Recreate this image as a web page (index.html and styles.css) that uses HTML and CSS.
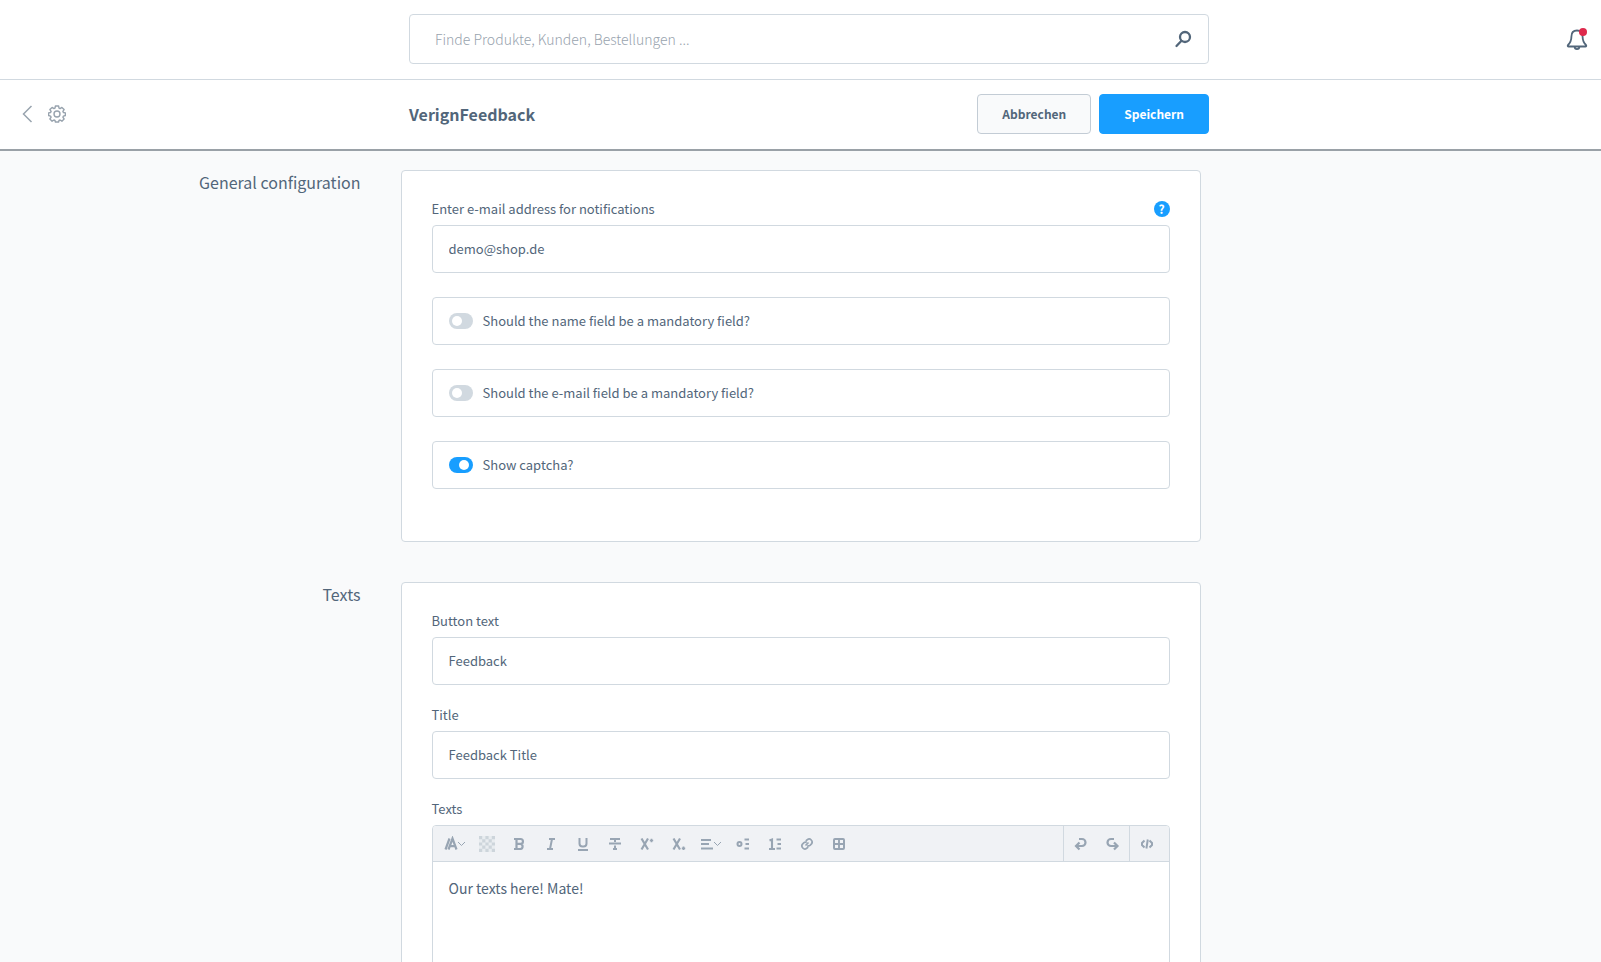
FILE: index.html
```html
<!DOCTYPE html>
<html lang="de">
<head>
<meta charset="utf-8">
<meta name="viewport" content="width=device-width, initial-scale=1">
<title>VerignFeedback</title>
<link rel="stylesheet" href="styles.css">
</head>
<body>
<div class="app">
  <header class="topbar">
    <form class="search" role="search">
      <input class="search-input" type="search" aria-label="Suche" placeholder="Finde Produkte, Kunden, Bestellungen ...">
      <button class="icon-button" type="button" aria-label="Suchen">
        <svg width="18" height="18" viewBox="0 0 18 18" fill="none" stroke="#52667a" stroke-width="2.300" stroke-linecap="round"><circle cx="11" cy="7" r="5"/><path d="M7.500 10.800 2.500 16"/></svg>
      </button>
    </form>
    <button class="icon-button notifications" type="button" aria-label="Benachrichtigungen">
      <svg width="22" height="24" viewBox="0 0 22 24" fill="none"><path d="M11 3.500c-4 0-5.600 3-5.600 6.200 0 4.500-1.400 6.300-3.400 8.300-.6.8-.2 1.500.6 1.500h16.800c.8 0 1.200-.7.6-1.500-2-2-3.400-3.800-3.400-8.300 0-3.200-1.600-6.200-5.600-6.200Z" stroke="#52667a" stroke-width="1.800"/><path d="M8.700 19.800a2.300 2.300 0 0 0 4.600 0" stroke="#52667a" stroke-width="1.800"/><circle cx="17" cy="5" r="4" fill="#de294c"/></svg>
    </button>
  </header>

  <div class="smartbar">
    <nav class="smartbar-nav" aria-label="Navigation">
      <a class="nav-link" href="#back" aria-label="Zurück"><svg width="12" height="18" viewBox="0 0 12 18" fill="none" stroke="#98a3ae" stroke-width="1.500"><path d="M9.500 1 1.500 9l8 8"/></svg></a>
      <a class="nav-link" href="#settings" aria-label="Einstellungen"><svg width="18" height="18" viewBox="0 0 18 18" fill="none" stroke="#98a3ae" stroke-width="1.400" stroke-linejoin="round"><path d="M7.400 1h3.200l.4 2.100 1.100.5 1.800-1.200 2.200 2.200-1.200 1.800.5 1.100 2 .4v2.600l-2 .6-.5 1.100 1.200 1.800-2.200 2.200-1.800-1.200-1.100.5-.4 1.500H7.400L7 15.500 5.900 15l-1.800 1.200L1.900 14l1.200-1.800-.5-1.100-2-.6V7.900l2-.4.5-1.100-1.200-1.800 2.200-2.200 1.800 1.200L7 3.100Z"/><circle cx="9" cy="9" r="3"/></svg></a>
    </nav>
    <div class="smartbar-content">
      <h1 class="page-title">VerignFeedback</h1>
      <div class="actions">
        <button class="button" type="button">Abbrechen</button>
        <button class="button button-primary" type="submit" form="config">Speichern</button>
      </div>
    </div>
  </div>

  <main class="content">
    <form id="config">
      <section class="section">
        <h2 class="section-title">General configuration</h2>
        <div class="card switches">
          <div class="field">
            <div class="label-row">
              <label class="label" for="email">Enter e-mail address for notifications</label>
              <button class="help" type="button" aria-label="Hilfe">?</button>
            </div>
            <input class="text-input" id="email" type="text" value="demo@shop.de">
          </div>
          <label class="switch-field"><input class="switch" type="checkbox">Should the name field be a mandatory field?</label>
          <label class="switch-field"><input class="switch" type="checkbox">Should the e-mail field be a mandatory field?</label>
          <label class="switch-field"><input class="switch" type="checkbox" checked>Show captcha?</label>
        </div>
      </section>

      <section class="section">
        <h2 class="section-title">Texts</h2>
        <div class="card">
          <div class="field">
            <div class="label-row"><label class="label" for="button-text">Button text</label></div>
            <input class="text-input" id="button-text" type="text" value="Feedback">
          </div>
          <div class="field">
            <div class="label-row"><label class="label" for="title">Title</label></div>
            <input class="text-input" id="title" type="text" value="Feedback Title">
          </div>
          <div class="field">
            <div class="label-row"><label class="label" for="texts">Texts</label></div>
            <div class="editor">
              <div class="toolbar" role="toolbar" aria-label="Formatierung">
                <div class="tool-group">
                  <button class="tool" type="button" aria-label="Absatz"><svg width="22" height="16" viewBox="0 0 22 16"><path d="M1.500 13.500 5.500 2.500M4.500 13.500 8.500 2.500l4 11M6 10.200h5.500" stroke-width="2.200"/><path d="m14 6 3.500 3.500L21 6" stroke-width="1"/></svg></button>
                  <button class="tool" type="button" aria-label="Textfarbe"><svg width="16" height="16" viewBox="0 0 5 5"><path class="checker-base" d="M0 0h5v5H0z"/><path class="checker" d="M0 0h1v1H0zM2 0h1v1H2zM4 0h1v1H4zM1 1h1v1H1zM3 1h1v1H3zM0 2h1v1H0zM2 2h1v1H2zM4 2h1v1H4zM1 3h1v1H1zM3 3h1v1H3zM0 4h1v1H0zM2 4h1v1H2zM4 4h1v1H4z"/></svg></button>
                  <button class="tool" type="button" aria-label="Fett"><svg width="16" height="16" viewBox="0 0 16 16"><path d="M3 3h6.500a2.400 2.400 0 0 1 0 4.900H5.500M9.500 7.900a2.600 2.600 0 0 1 0 5.100H3M5.500 3v10" stroke-width="2.200"/></svg></button>
                  <button class="tool" type="button" aria-label="Kursiv"><svg width="16" height="16" viewBox="0 0 16 16"><path d="M6 3h6M4 13h6M9 3 7 13" stroke-width="2"/></svg></button>
                  <button class="tool" type="button" aria-label="Unterstrichen"><svg width="16" height="16" viewBox="0 0 16 16"><path d="M4.500 2v5.500q0 3 3 3h1q3 0 3-3V2M3 14h10" stroke-width="2"/></svg></button>
                  <button class="tool" type="button" aria-label="Durchgestrichen"><svg width="16" height="16" viewBox="0 0 16 16"><path d="M3 3h10M2 7.500h12M8 3v3M8 9.500V13M6 13h4" stroke-width="2"/></svg></button>
                  <button class="tool" type="button" aria-label="Hochgestellt"><svg width="16" height="16" viewBox="0 0 16 16"><path d="m2.500 2.500 6.500 11M9 2.500 2.500 13.500" stroke-width="2.200"/><path d="M10.800 4.500h3.400M12.500 2.800v3.400" stroke-width="1.700"/></svg></button>
                  <button class="tool" type="button" aria-label="Tiefgestellt"><svg width="16" height="16" viewBox="0 0 16 16"><path d="m2.500 2.500 6.500 11M9 2.500 2.500 13.500" stroke-width="2.200"/><path d="M10.800 12.300h3.400M12.500 10.600V14" stroke-width="1.700"/></svg></button>
                  <button class="tool" type="button" aria-label="Ausrichtung"><svg width="22" height="16" viewBox="0 0 22 16"><path d="M1 4h10M1 8h8M1 12.500h12" stroke-width="2"/><path d="m14 6 3.500 3.500L21 6" stroke-width="1"/></svg></button>
                  <button class="tool" type="button" aria-label="Liste"><svg width="16" height="16" viewBox="0 0 16 16"><circle cx="4.500" cy="8" r="2" stroke-width="2"/><path d="M9.500 3.500h4.500M10.500 8H14M9.500 12.500h4.500" stroke-width="2"/></svg></button>
                  <button class="tool" type="button" aria-label="Nummerierte Liste"><svg width="16" height="16" viewBox="0 0 16 16"><path d="M2.500 4.500 5 3.500v9.500M2 13h6" stroke-width="2.100"/><path d="M9.500 3.500h4.500M10.500 8H14M9.500 12.500h4.500" stroke-width="2"/></svg></button>
                  <button class="tool" type="button" aria-label="Link"><svg width="16" height="16" viewBox="0 0 16 16"><path d="M6.800 5 8.300 3.700a3 3 0 0 1 4.200 4.200L11 9.300q-1.300 1-2.700.2M9.200 11 7.700 12.300a3 3 0 0 1-4.200-4.200L5 6.700q1.300-1 2.700-.2M6.500 9.500l3-3" stroke-width="1.700"/></svg></button>
                  <button class="tool" type="button" aria-label="Tabelle"><svg width="16" height="16" viewBox="0 0 16 16"><rect x="3" y="3" width="10" height="10" rx="1" stroke-width="2"/><path d="M8 3v10M3 8h10" stroke-width="1.900"/></svg></button>
                </div>
                <div class="tool-group history">
                  <button class="tool" type="button" aria-label="Rückgängig"><svg width="16" height="16" viewBox="0 0 16 16"><path d="M7 3h3a3.500 3.500 0 0 1 0 7H4.500M7.500 6.500 4 10l3.500 3.500" stroke-width="2.200"/></svg></button>
                  <button class="tool" type="button" aria-label="Wiederholen"><svg width="16" height="16" viewBox="0 0 16 16"><path d="M10 3H7a3.500 3.500 0 0 0 0 7h6M10 6.500l3.500 3.500-3.500 3.500" stroke-width="2.200"/></svg></button>
                </div>
                <div class="tool-group source">
                  <button class="tool" type="button" aria-label="Quellcode"><svg width="16" height="16" viewBox="0 0 16 16"><path d="M5.500 4.500 3 7v2l2.500 2.500M10.500 4.500 13 7v2l-2.500 2.500M8.800 3.500l-1.400 9" stroke-width="2"/></svg></button>
                </div>
              </div>
              <textarea class="editor-text" id="texts" spellcheck="false">Our texts here! Mate!</textarea>
            </div>
          </div>
        </div>
      </section>
    </form>
  </main>
</div>
</body>
</html>
```
FILE: styles.css
```css
*, *::before, *::after { box-sizing: border-box; }

body {
  margin: 0;
  color: #52667a;
  background: #f9fafb;
  font-family: "Noto Sans CJK SC", "Noto Sans", sans-serif;
  font-size: 13px;
  line-height: 16px;
}

button, input, textarea { font: inherit; color: inherit; margin: 0; }
button { cursor: pointer; }
svg { display: block; }

.app { display: flex; flex-direction: column; height: 100vh; }

.topbar, .smartbar {
  display: grid;
  grid-template-columns: 1fr minmax(0, 800px) 1fr;
  align-items: center;
  flex: none;
  padding: 0 0 2px 17px;
  background: #fff;
}
.topbar { height: 80px; border-bottom: 1px solid #d1d9e0; }
.smartbar { height: 71px; border-bottom: 2px solid #9aa1a7; }

.search {
  grid-column: 2;
  display: flex;
  align-items: center;
  height: 50px;
  padding: 0 16px 0 25px;
  border: 1px solid #d1d9e0;
  border-radius: 4px;
}
.search-input {
  flex: 1;
  min-width: 0;
  padding: 0;
  border: 0;
  outline: 0;
  background: none;
  font-size: 14px;
  line-height: 24px;
}
.search-input::placeholder { color: #98a3ae; font-weight: 300; opacity: 1; }
.icon-button { padding: 0; border: 0; background: none; }
.notifications { justify-self: end; margin-right: 13px; }

.smartbar-nav { display: flex; align-items: center; gap: 14px; padding-left: 5px; }
.nav-link { display: block; }
.smartbar-content { display: flex; align-items: center; justify-content: space-between; }
.page-title { margin: 0; font-size: 16px; line-height: 24px; font-weight: 600; }
.actions { display: flex; gap: 8px; }
.button {
  height: 40px;
  padding: 0 24px;
  border: 1px solid #c3ccd5;
  border-radius: 4px;
  background: #f9fafb;
  font-size: 12px;
  font-weight: 600;
}
.button-primary { border-color: #189eff; background: #189eff; color: #fff; }

.content { flex: 1; min-height: 0; padding-top: 19px; overflow-y: auto; scrollbar-width: none; }
.section {
  display: grid;
  grid-template-columns: 1fr minmax(0, 800px) 1fr;
  margin-bottom: 40px;
}
.section-title {
  margin: 0 40px 0 16px;
  font-size: 16px;
  line-height: 24px;
  font-weight: 400;
  text-align: right;
}
.card {
  display: flex;
  flex-direction: column;
  gap: 22px;
  padding: 30px;
  border: 1px solid #d1d9e0;
  border-radius: 4px;
  background: #fff;
}
.switches { gap: 24px; padding-bottom: 52px; }

.label-row { display: flex; align-items: center; justify-content: space-between; height: 16px; margin-bottom: 8px; }
.help {
  width: 16px;
  height: 16px;
  padding: 0;
  border: 0;
  border-radius: 50%;
  background: #189eff;
  color: #fff;
  font-size: 12px;
  line-height: 16px;
  font-weight: 700;
}
.text-input {
  display: block;
  width: 100%;
  height: 48px;
  padding: 0 16px 2px;
  border: 1px solid #d1d9e0;
  border-radius: 4px;
  background: #fff;
}
.switch-field {
  display: flex;
  align-items: center;
  gap: 10px;
  height: 48px;
  padding: 0 16px;
  border: 1px solid #d1d9e0;
  border-radius: 4px;
}
.switch {
  display: flex;
  align-items: center;
  appearance: none;
  width: 24px;
  height: 16px;
  padding: 0 4px 0 3px;
  border-radius: 8px;
  background: #d1d9e0;
}
.switch::before { content: ""; width: 10px; height: 10px; border-radius: 50%; background: #fff; }
.switch:checked { justify-content: flex-end; background: #189eff; }

.editor { border: 1px solid #d1d9e0; border-radius: 4px; overflow: hidden; }
.toolbar {
  display: flex;
  height: 36px;
  border-bottom: 1px solid #d1d9e0;
  background: #f0f2f5;
}
.tool-group { display: flex; padding-left: 6px; }
.tool {
  display: flex;
  align-items: center;
  justify-content: center;
  width: 32px;
  padding: 0;
  border: 0;
  background: none;
}
.tool svg { fill: none; stroke: #98a5b3; }
.tool .checker-base { fill: #e9edf0; stroke: none; }
.tool .checker { fill: #cdd5db; stroke: none; }
.history { margin-left: auto; padding: 0 1px 0 0; border-left: 1px solid #d1d9e0; }
.source { padding: 0 6px 0 1px; border-left: 1px solid #d1d9e0; }
.editor-text {
  display: block;
  width: 100%;
  height: 280px;
  padding: 14px 16px;
  border: 0;
  outline: 0;
  resize: none;
  background: #fff;
  font-size: 14px;
  line-height: 24px;
}
```
